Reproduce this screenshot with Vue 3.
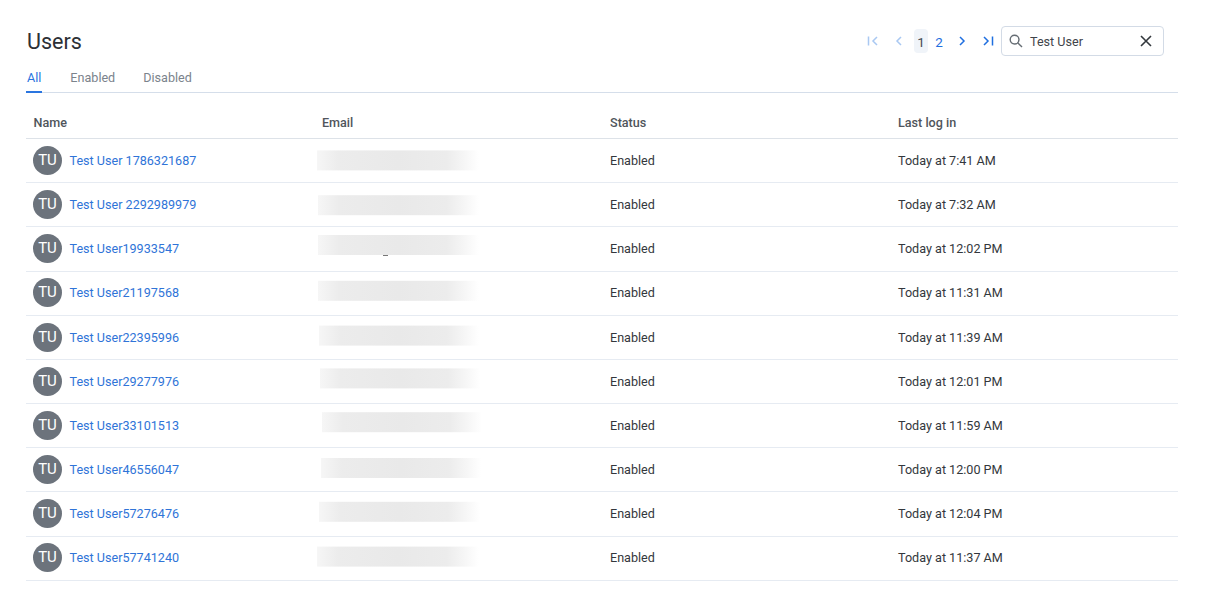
<script setup>
const users = [
  { name: 'Test User 1786321687', shift: -5.5, width: 162, dy: 0.4, last: 'Today at 7:41 AM' },
  { name: 'Test User 2292989979', shift: -4, width: 161, dy: 1.2, last: 'Today at 7:32 AM' },
  { name: 'Test User19933547', shift: -4, width: 161, dy: -4, last: 'Today at 12:02 PM', speck: true },
  { name: 'Test User21197568', shift: -4, width: 161, dy: -2.2, last: 'Today at 11:31 AM' },
  { name: 'Test User22395996', shift: -3, width: 160, dy: -1.4, last: 'Today at 11:39 AM' },
  { name: 'Test User29277976', shift: -2, width: 160, dy: -2.6, last: 'Today at 12:01 PM' },
  { name: 'Test User33101513', shift: 0, width: 160, dy: -2.8, last: 'Today at 11:59 AM' },
  { name: 'Test User46556047', shift: -1, width: 160, dy: -2, last: 'Today at 12:00 PM' },
  { name: 'Test User57276476', shift: -3, width: 161, dy: -2.2, last: 'Today at 12:04 PM' },
  { name: 'Test User57741240', shift: -5, width: 162, dy: -1.4, last: 'Today at 11:37 AM' },
]
const tabs = ['All', 'Enabled', 'Disabled']
</script>

<template>
  <div class="page">
    <header class="top">
      <h1 class="title">Users</h1>
      <div class="tools">
        <nav class="pager">
          <button class="pg-icon first faded" aria-label="First">
            <svg viewBox="0 0 16 16" width="16" height="16"><path d="M3.5 3.5v9M12 4L8 8l4 4" /></svg>
          </button>
          <button class="pg-icon prev faded" aria-label="Previous">
            <svg viewBox="0 0 16 16" width="16" height="16"><path d="M10 4L6 8l4 4" /></svg>
          </button>
          <span class="pg-num current">1</span>
          <span class="pg-num">2</span>
          <button class="pg-icon next" aria-label="Next">
            <svg viewBox="0 0 16 16" width="16" height="16"><path d="M6 4l4 4-4 4" /></svg>
          </button>
          <button class="pg-icon last" aria-label="Last">
            <svg viewBox="0 0 16 16" width="16" height="16"><path d="M4 4l4 4-4 4M12.5 3.5v9" /></svg>
          </button>
        </nav>
        <div class="search">
          <svg class="lens" viewBox="0 0 16 16" width="16" height="16"><circle cx="6.6" cy="6.6" r="4.4" /><path d="M9.9 9.9L14 14" /></svg>
          <span class="query">Test User</span>
          <svg class="clear" viewBox="0 0 16 16" width="16" height="16"><path d="M3 3l10 10M13 3L3 13" /></svg>
        </div>
      </div>
    </header>

    <div class="tabs">
      <span v-for="(t, i) in tabs" :key="t" class="tab" :class="{ active: i === 0 }">{{ t }}</span>
    </div>

    <div class="thead row-grid">
      <div class="col-name">Name</div>
      <div>Email</div>
      <div>Status</div>
      <div>Last log in</div>
    </div>

    <div v-for="u in users" :key="u.name" class="row row-grid">
      <div class="name-cell">
        <span class="avatar">TU</span>
        <a class="link">{{ u.name }}</a>
      </div>
      <div class="email-cell">
        <span class="blur" :style="{ marginLeft: u.shift + 'px', width: u.width + 'px', transform: 'translateY(' + u.dy + 'px)' }">
          <i v-if="u.speck" class="speck"></i>
        </span>
      </div>
      <div>Enabled</div>
      <div>{{ u.last }}</div>
    </div>
  </div>
</template>

<style>
html, body { background: #fff; }
</style>

<style scoped>
.page {
  box-sizing: border-box;
  width: 1205px;
  height: 599px;
  overflow: hidden;
  padding: 26px 27px 0 26px;
  font-family: Roboto, "Liberation Sans", sans-serif;
  font-size: 12.6px;
  color: #33373c;
}
.top {
  display: flex;
  justify-content: space-between;
  align-items: flex-start;
  height: 40px;
  padding-right: 14px;
}
.title {
  margin: 1px 0 0 1px;
  font-size: 21.5px;
  line-height: 30px;
  font-weight: 400;
  color: #2c3035;
}
.tools { display: flex; align-items: center; height: 30px; }
.pager { display: flex; align-items: center; color: #1f6fe0; }
.pg-icon {
  display: flex;
  align-items: center;
  justify-content: center;
  padding: 0;
  border: 0;
  background: none;
  color: inherit;
}
.pg-icon svg { fill: none; stroke: currentColor; stroke-width: 1.5; }
.faded { color: #a9c8f2; }
.first { margin-right: 10px; }
.prev { margin-right: 7px; }
.next { margin-left: 8px; margin-right: 10px; }
.last { margin-right: 5px; }
.pg-num {
  width: 14px;
  height: 24px;
  margin-right: 4px;
  text-align: center;
  line-height: 27px;
  font-size: 13.5px;
  border-radius: 4px;
}
.pg-num:last-of-type { margin-right: 0; }
.current { background: #f0f4f9; color: #444a50; }
.search {
  box-sizing: border-box;
  display: flex;
  align-items: center;
  width: 163px;
  height: 30px;
  padding: 0 9px 0 6px;
  border: 1px solid #d3dbe6;
  border-radius: 4px;
}
.lens { fill: none; stroke: #666d74; stroke-width: 1.4; }
.query { margin-left: 6px; flex: 1; color: #3f444a; font-size: 12.6px; }
.clear { fill: none; stroke: #33383d; stroke-width: 1.6; }
.tabs {
  display: flex;
  gap: 28px;
  height: 26.4px;
  border-bottom: 1px solid #d5deea;
  line-height: 23px;
  color: #7b838c;
}
.tab { height: 26.4px; }
.active {
  box-sizing: border-box;
  padding: 0 1px;
  color: #2a75e0;
  border-bottom: 2px solid #2a75e0;
  height: 27.4px;
}
.row-grid { display: grid; grid-template-columns: repeat(4, 288px); }
.row-grid > div { padding-left: 8px; }
.row-grid > .col-name { padding-left: 7.5px; }
.thead {
  height: 45.6px;
  box-sizing: border-box;
  align-items: center;
  padding-top: 13.5px;
  border-bottom: 1px solid #dde2e8;
  font-weight: 500;
  color: #50555b;
}
.row {
  box-sizing: border-box;
  height: 44.2px;
  padding-bottom: 0.6px;
  align-items: center;
  border-bottom: 1px solid #e6ebf2;
}
.name-cell { display: flex; align-items: center; gap: 7.5px; }
.row-grid > .name-cell { padding-left: 7px; }
.avatar {
  width: 29px;
  height: 29px;
  border-radius: 50%;
  background: #6c737c;
  color: #fff;
  font-size: 15px;
  line-height: 28px;
  text-align: center;
}
.link { color: #2f74d8; }
.email-cell { display: flex; align-items: center; }
.blur {
  position: relative;
  display: block;
  height: 20px;
  background: linear-gradient(90deg, #f6f6f6 0%, #ececec 13%, #e9e9e9 50%, #ececec 80%, #f6f6f6 91%, #fff 100%);
}
.speck {
  position: absolute;
  left: 65px;
  bottom: -1px;
  width: 5px;
  height: 1px;
  background: #777;
}
</style>
